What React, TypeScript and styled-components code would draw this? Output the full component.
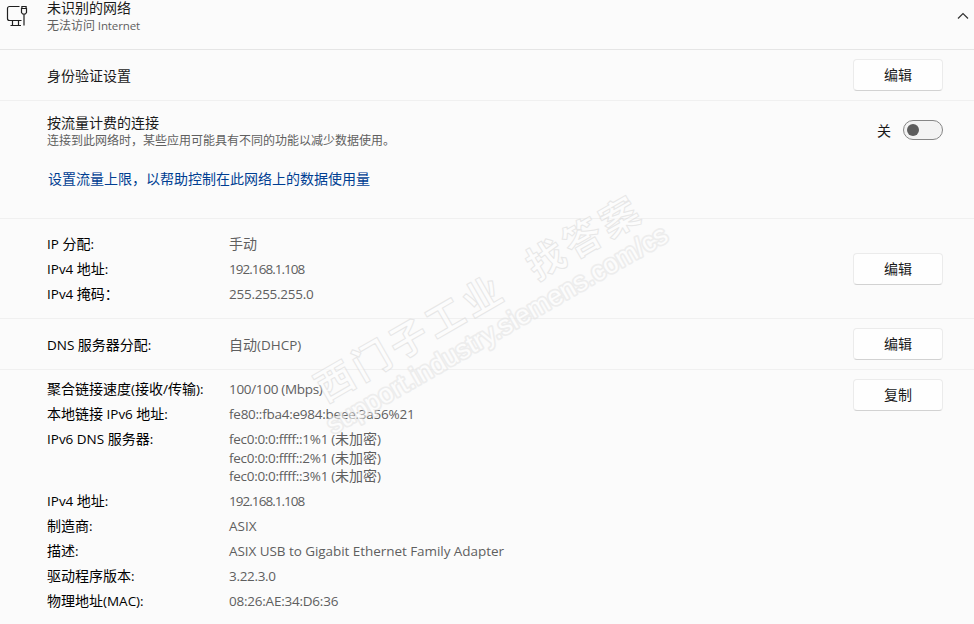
import * as React from "react";
import styled, { createGlobalStyle } from "styled-components";

const colors = {
  page: "#fbfbfb",
  text: "#1a1a1a",
  label: "#000000",
  muted: "#5f5f5f",
  link: "#003e92",
  line: "#f0f0f0",
};

const GlobalStyle = createGlobalStyle`
  * {
    box-sizing: border-box;
  }
  body {
    margin: 0;
    overflow: hidden;
    background: ${colors.page};
    color: ${colors.text};
    font-family: "Noto Sans CJK SC", sans-serif;
    font-size: 14px;
  }
`;

const Page = styled.main`
  position: relative;
  width: 974px;
  height: 624px;
`;

const Latin = styled.span<{ $tracking: number }>`
  font-family: "Open Sans", "Noto Sans", sans-serif;
  font-size: 0.964em;
  line-height: 1;
  letter-spacing: ${(p) => p.$tracking}px;
  white-space: pre;
`;

interface MixedProps {
  children: string;
  tracking?: number;
}

// Latin runs are set a little smaller than the Chinese around them
const Mixed = ({ children, tracking = 0 }: MixedProps) => (
  <>
    {children.split(/([\x20-\x7e]+)/).map((run, index) =>
      index % 2 ? (
        <Latin key={index} $tracking={tracking}>
          {run}
        </Latin>
      ) : (
        run
      )
    )}
  </>
);

const Header = styled.header`
  display: flex;
  height: 50px;
  padding: 0 5px 0 6px;
  border-bottom: 1px solid #e5e5e5;

  svg {
    flex: none;
  }
`;

const HeaderText = styled.div`
  flex: 1;
  padding-left: 19px;
`;

const Title = styled.div`
  margin-bottom: 2px;
  line-height: 14px;
  white-space: nowrap;
`;

const Caption = styled.div`
  font-size: 12px;
  line-height: 17px;
  color: ${colors.muted};
  white-space: nowrap;
`;

const Section = styled.section<{ $height?: number }>`
  display: flex;
  justify-content: space-between;
  height: ${(p) => (p.$height ? `${p.$height}px` : "auto")};
  padding: 0 31px 0 47px;
  border-bottom: ${(p) => (p.$height ? `1px solid ${colors.line}` : "none")};
`;

const Main = styled.div<{ $top: number }>`
  padding-top: ${(p) => p.$top}px;
`;

const Side = styled.div<{ $top: number }>`
  display: flex;
  align-items: flex-start;
  padding-top: ${(p) => p.$top}px;
`;

const Button = styled.button`
  width: 90px;
  height: 32px;
  padding: 0 0 3px;
  border: 1px solid #ebebeb;
  border-bottom-color: #d2d2d2;
  border-radius: 4px;
  background: #fefefe;
  color: ${colors.text};
  font: inherit;
  line-height: 26px;
`;

const Link = styled.a`
  display: block;
  margin: 20px 0 0 1px;
  line-height: 20px;
  color: ${colors.link};
`;

const SwitchLabel = styled.span`
  margin-right: 12px;
  line-height: 20px;
`;

const Switch = styled.div`
  display: flex;
  align-items: center;
  width: 40px;
  height: 20px;
  padding-left: 3px;
  border: 1px solid #868686;
  border-radius: 10px;
  background: #f3f3f3;

  &::before {
    content: "";
    width: 12px;
    height: 12px;
    border-radius: 50%;
    background: #5d5d5d;
  }
`;

const Row = styled.div`
  display: grid;
  grid-template-columns: 182px auto;
  padding: 3.2px 0;
  line-height: 18.6px;
  white-space: nowrap;
`;

const Label = styled.span`
  color: ${colors.label};
`;

const Value = styled.div`
  color: ${colors.muted};
`;

const Watermark = styled.svg`
  position: absolute;
  left: 300px;
  top: 180px;
  overflow: visible;
  opacity: 0.6;
  pointer-events: none;

  text {
    fill: #fdfdfd;
    stroke: #dadada;
    stroke-width: 1px;
    stroke-linejoin: round;
    font-weight: 700;
  }
  text:last-child {
    paint-order: stroke;
    stroke: #e4e4e4;
    stroke-width: 3.4px;
    font-weight: 400;
  }
`;

interface Entry {
  label: string;
  values: string[];
  tracking?: number;
}

const ipEntries: Entry[] = [
  { label: "IP 分配:", values: ["手动"] },
  { label: "IPv4 地址:", values: ["192.168.1.108"], tracking: -0.95 },
  { label: "IPv4 掩码：", values: ["255.255.255.0"], tracking: -0.25 },
];

const dnsEntries: Entry[] = [
  { label: "DNS 服务器分配:", values: ["自动(DHCP)"], tracking: 0 },
];

const adapterEntries: Entry[] = [
  {
    label: "聚合链接速度(接收/传输):",
    values: ["100/100 (Mbps)"],
    tracking: -0.3,
  },
  {
    label: "本地链接 IPv6 地址:",
    values: ["fe80::fba4:e984:beee:3a56%21"],
    tracking: -0.24,
  },
  {
    label: "IPv6 DNS 服务器:",
    values: [
      "fec0:0:0:ffff::1%1 (未加密)",
      "fec0:0:0:ffff::2%1 (未加密)",
      "fec0:0:0:ffff::3%1 (未加密)",
    ],
    tracking: -0.28,
  },
  { label: "IPv4 地址:", values: ["192.168.1.108"], tracking: -0.95 },
  { label: "制造商:", values: ["ASIX"] },
  {
    label: "描述:",
    values: ["ASIX USB to Gigabit Ethernet Family Adapter"],
    tracking: -0.05,
  },
  { label: "驱动程序版本:", values: ["3.22.3.0"], tracking: -0.3 },
  { label: "物理地址(MAC):", values: ["08:26:AE:34:D6:36"], tracking: -0.22 },
];

const Entries = ({ entries }: { entries: Entry[] }) => (
  <>
    {entries.map((entry) => (
      <Row key={entry.label}>
        <Label>
          <Mixed>{entry.label}</Mixed>
        </Label>
        <div>
          {entry.values.map((value) => (
            <Value key={value}>
              <Mixed tracking={entry.tracking}>{value}</Mixed>
            </Value>
          ))}
        </div>
      </Row>
    ))}
  </>
);

const EthernetIcon = () => (
  <svg width="22" height="30" viewBox="0 0 22 30" fill="none" stroke="#1f1f1f" strokeWidth="1.2">
    <path d="M13.5 6.5H3.5a2 2 0 0 0-2 2v10a2 2 0 0 0 2 2h12M6.5 20.5v5M12.5 20.5v5M4.5 25.5h10.5" />
    <path d="M15.5 8.5h5v4l-1.2 1.5h-2.6l-1.2-1.5zM15.9 8.5v-2h4.2v2M18 14v11.5" />
  </svg>
);

const ChevronUp = () => (
  <svg width="12" height="30" viewBox="0 0 12 30" fill="none" stroke="#333" strokeWidth="1.2">
    <path d="M1 18.5l5-5 5 5" />
  </svg>
);

export default function App() {
  return (
    <Page>
      <GlobalStyle />
      <Header>
        <EthernetIcon />
        <HeaderText>
          <Title>未识别的网络</Title>
          <Caption>
            <Mixed tracking={-0.15}>无法访问 Internet</Mixed>
          </Caption>
        </HeaderText>
        <ChevronUp />
      </Header>
      <Section $height={51}>
        <Main $top={18}>
          <Title>身份验证设置</Title>
        </Main>
        <Side $top={9}>
          <Button>编辑</Button>
        </Side>
      </Section>
      <Section $height={118}>
        <Main $top={14}>
          <Title>按流量计费的连接</Title>
          <Caption>连接到此网络时，某些应用可能具有不同的功能以减少数据使用。</Caption>
          <Link>设置流量上限，以帮助控制在此网络上的数据使用量</Link>
        </Main>
        <Side $top={19}>
          <SwitchLabel>关</SwitchLabel>
          <Switch role="switch" aria-checked={false} />
        </Side>
      </Section>
      <Section $height={100}>
        <Main $top={12}>
          <Entries entries={ipEntries} />
        </Main>
        <Side $top={34}>
          <Button>编辑</Button>
        </Side>
      </Section>
      <Section $height={51}>
        <Main $top={13}>
          <Entries entries={dnsEntries} />
        </Main>
        <Side $top={9}>
          <Button>编辑</Button>
        </Side>
      </Section>
      <Section>
        <Main $top={6}>
          <Entries entries={adapterEntries} />
        </Main>
        <Side $top={9}>
          <Button>复制</Button>
        </Side>
      </Section>
      <Watermark width="380" height="260" viewBox="0 0 380 260">
        <g transform="translate(35 200) rotate(-30)">
          <text x="-20" y="15" fontSize="38" letterSpacing="4.5" fontFamily="Noto Sans CJK SC">
            西门子工业
          </text>
          <text x="224" y="15" fontSize="38" letterSpacing="4.3" fontFamily="Noto Sans CJK SC">
            找答案
          </text>
          <text x="-29" y="46" fontSize="26.5" textLength="389" fontFamily="Liberation Sans">
            support.industry.siemens.com/cs
          </text>
        </g>
      </Watermark>
    </Page>
  );
}
